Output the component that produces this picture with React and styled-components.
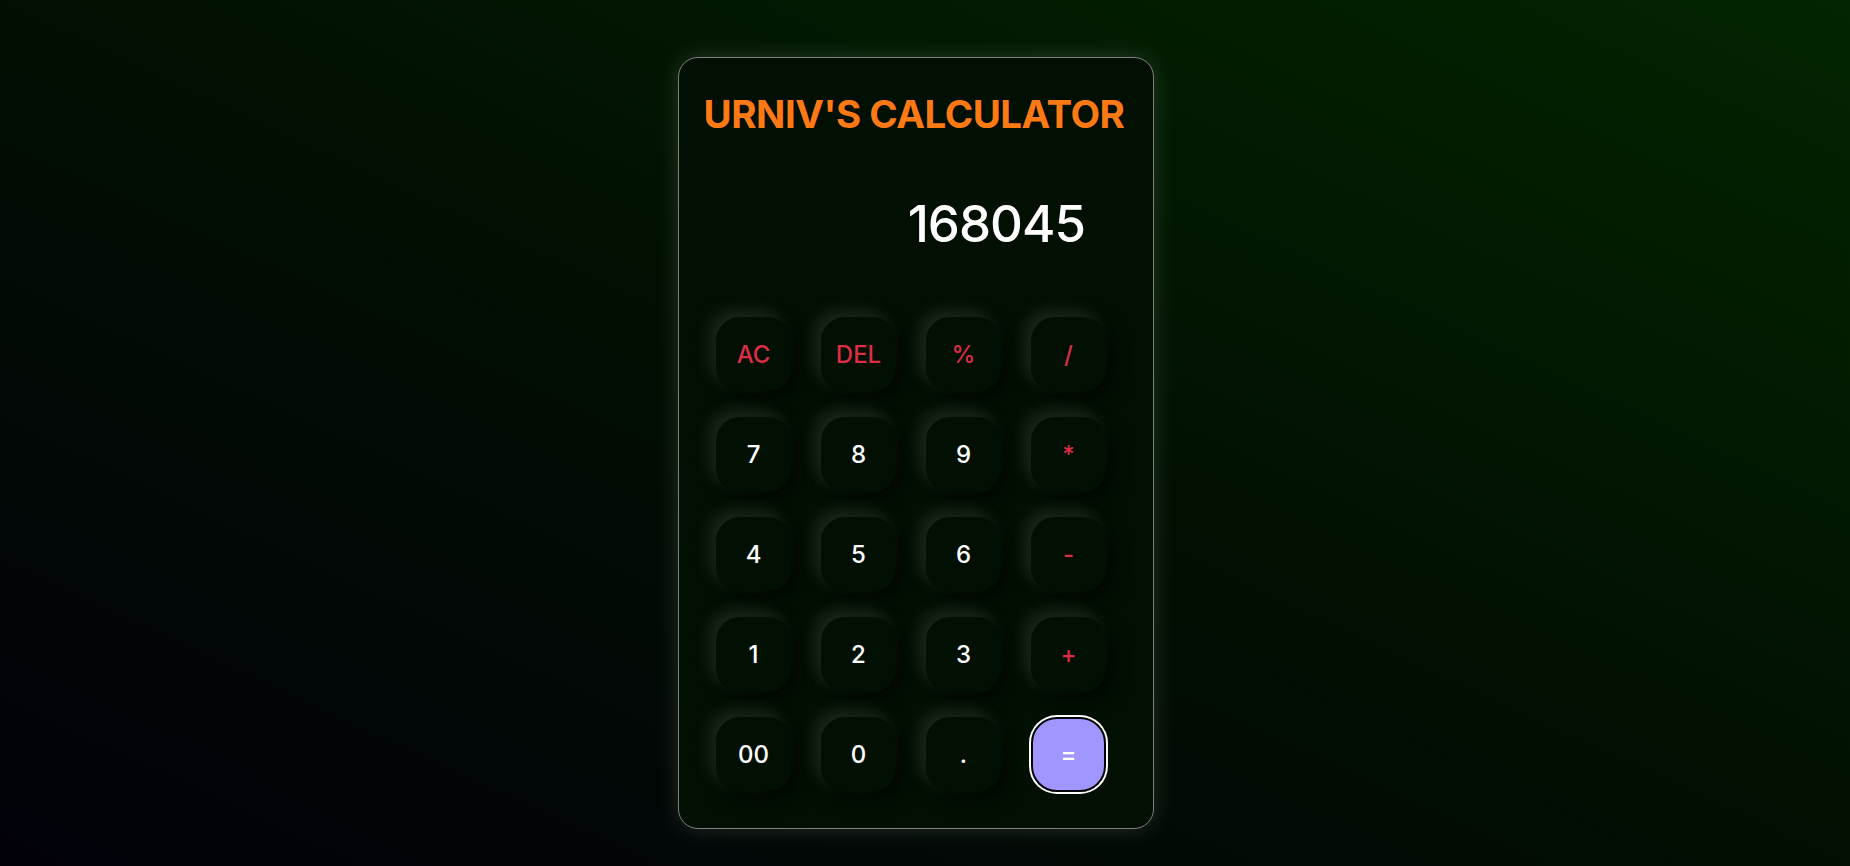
import React from "react";
import styled, { createGlobalStyle } from "styled-components";

const Global = createGlobalStyle`
  html, body { margin: 0; padding: 0; }
  body {
    min-height: 100vh;
    background: linear-gradient(to top right, #02010a 0%, #020f02 50%, #032501 100%);
    font-family: Inter, "Noto Sans", sans-serif;
  }
`;

const Page = styled.main`
  display: flex;
  justify-content: center;
  padding: 57px 18px 0 0;
  height: 866px;
  box-sizing: border-box;
`;

const Card = styled.section`
  box-sizing: border-box;
  width: 476px;
  height: 772px;
  border: 1px solid #7d807d;
  border-radius: 20px;
  background: #020f03;
  box-shadow: 0 0 22px rgba(220, 235, 220, 0.16);
  padding: 0 46px 0 37px;
  display: flex;
  flex-direction: column;
`;

const Title = styled.h1`
  margin: 28px -35px 0 -30px;
  text-align: center;
  white-space: nowrap;
  font-size: 38.5px;
  font-weight: 700;
  line-height: 56px;
  color: #fd7913;
  letter-spacing: -0.5px;
`;

const Display = styled.div`
  margin-top: 52px;
  height: 100px;
  text-align: right;
  padding-right: 22px;
  font-size: 51px;
  font-weight: 500;
  line-height: 60px;
  letter-spacing: -1px;
  color: #ffffff;
`;

const Keys = styled.div`
  margin-top: 23px;
  display: grid;
  grid-template-columns: repeat(4, 75px);
  grid-auto-rows: 75px;
  column-gap: 30px;
  row-gap: 25px;
`;

const Key = styled.button`
  box-sizing: border-box;
  border: none;
  border-radius: 24px;
  background: ${(p) => (p.$eq ? "#a196ff" : "#020f03")};
  color: ${(p) => (p.$op ? "#dc2d44" : "#ffffff")};
  font-family: Inter, "Noto Sans", sans-serif;
  font-size: 24px;
  font-weight: 500;
  display: flex;
  align-items: center;
  justify-content: center;
  padding: 0;
  box-shadow: ${(p) =>
    p.$eq
      ? "0 0 0 2px #ffffff"
      : "-7px -7px 16px rgba(210, 230, 210, 0.12), 7px 7px 16px rgba(0, 0, 0, 0.55)"};
  ${(p) => p.$eq && "border: 2px solid #050505; border-radius: 26px;"}
`;

const keys = [
  ["AC", true], ["DEL", true], ["%", true], ["/", true],
  ["7"], ["8"], ["9"], ["*", true],
  ["4"], ["5"], ["6"], ["-", true],
  ["1"], ["2"], ["3"], ["+", true],
  ["00"], ["0"], ["."], ["=", false, true],
];

export default function App() {
  return (
    <>
      <Global />
      <Page>
        <Card>
          <Title>URNIV'S CALCULATOR</Title>
          <Display>168045</Display>
          <Keys>
            {keys.map(([label, op, eq]) => (
              <Key key={label} $op={op} $eq={eq}>
                {label}
              </Key>
            ))}
          </Keys>
        </Card>
      </Page>
    </>
  );
}
